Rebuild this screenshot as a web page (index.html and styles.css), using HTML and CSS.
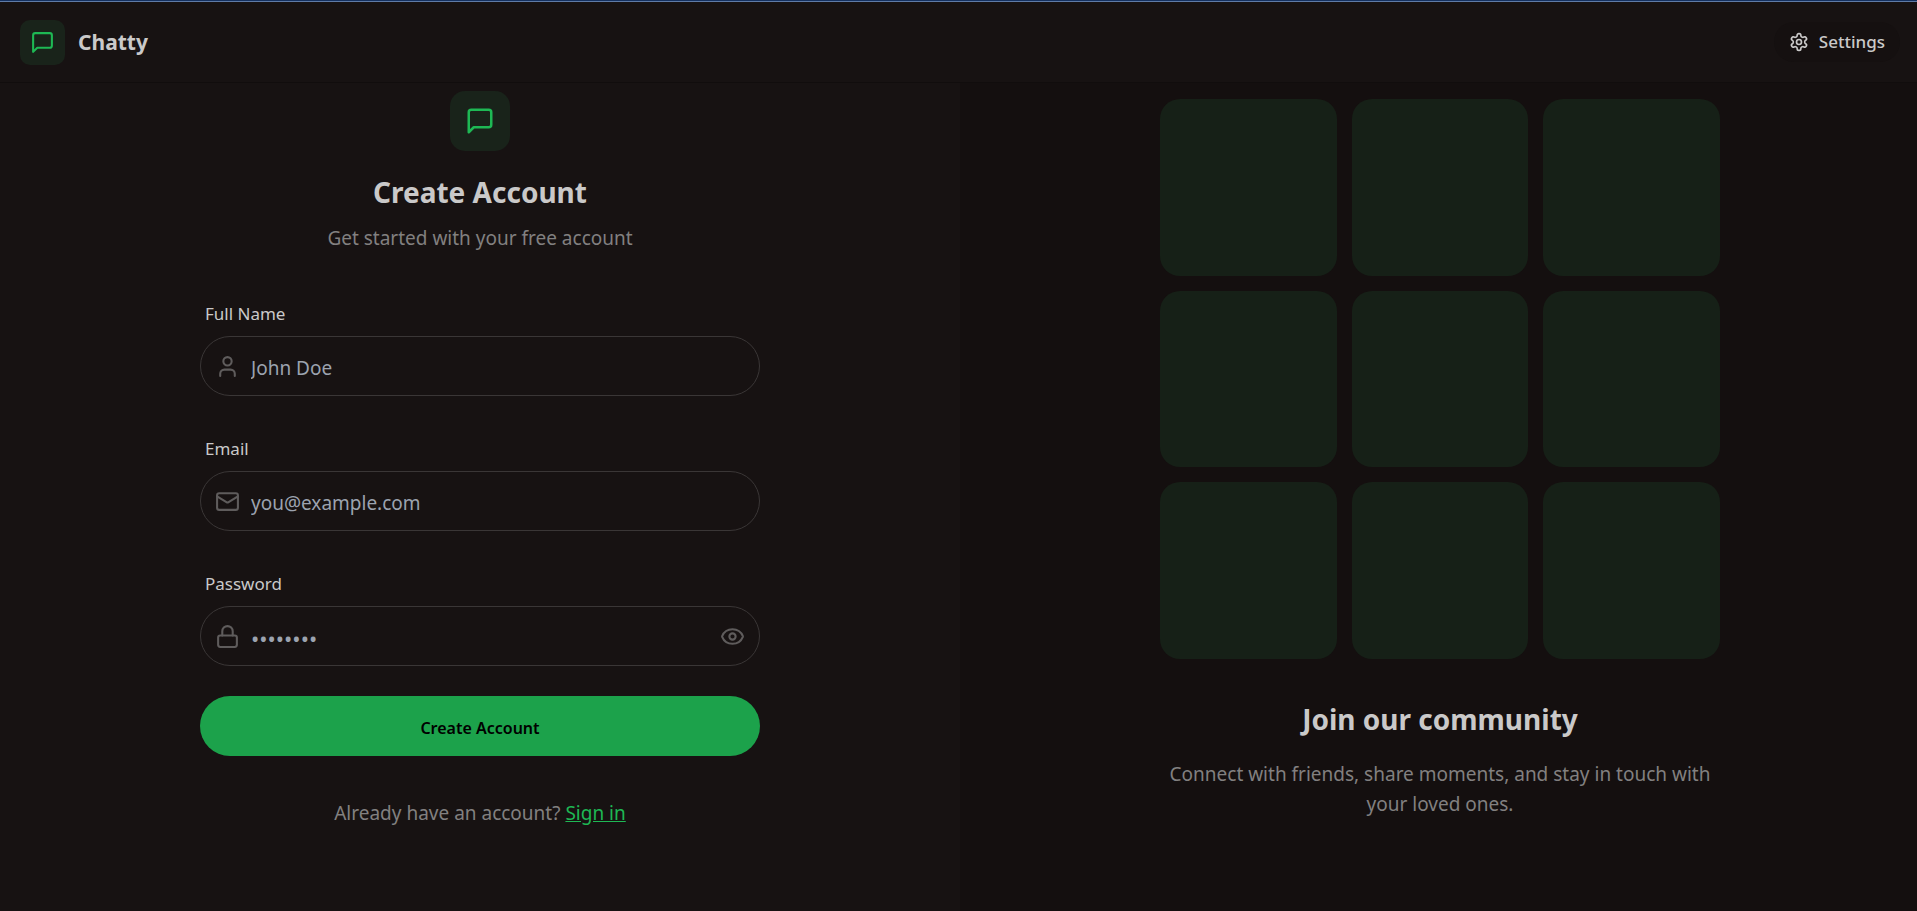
FILE: index.html
```html
<!DOCTYPE html>
<html lang="en">
<head>
<meta charset="utf-8">
<meta name="viewport" content="width=device-width, initial-scale=1">
<title>Chatty</title>
<link rel="stylesheet" href="styles.css">
</head>
<body>
<div class="page">
  <header class="topbar">
    <a class="brand" href="#">
      <span class="brand-mark">
        <svg class="icon" viewBox="0 0 24 24"><path d="M21 15a2 2 0 0 1-2 2H7l-4 4V5a2 2 0 0 1 2-2h14a2 2 0 0 1 2 2z"/></svg>
      </span>
      <span class="brand-name">Chatty</span>
    </a>
    <a class="settings" href="#">
      <svg class="icon icon-small" viewBox="0 0 24 24"><path d="M12.22 2h-.44a2 2 0 0 0-2 2v.18a2 2 0 0 1-1 1.73l-.43.25a2 2 0 0 1-2 0l-.15-.08a2 2 0 0 0-2.73.73l-.22.38a2 2 0 0 0 .73 2.73l.15.1a2 2 0 0 1 1 1.72v.51a2 2 0 0 1-1 1.74l-.15.09a2 2 0 0 0-.73 2.73l.22.38a2 2 0 0 0 2.73.73l.15-.08a2 2 0 0 1 2 0l.43.25a2 2 0 0 1 1 1.73V20a2 2 0 0 0 2 2h.44a2 2 0 0 0 2-2v-.18a2 2 0 0 1 1-1.73l.43-.25a2 2 0 0 1 2 0l.15.08a2 2 0 0 0 2.73-.73l.22-.39a2 2 0 0 0-.73-2.73l-.15-.08a2 2 0 0 1-1-1.74v-.5a2 2 0 0 1 1-1.74l.15-.09a2 2 0 0 0 .73-2.73l-.22-.38a2 2 0 0 0-2.73-.73l-.15.08a2 2 0 0 1-2 0l-.43-.25a2 2 0 0 1-1-1.73V4a2 2 0 0 0-2-2z"/><circle cx="12" cy="12" r="3"/></svg>
      <span>Settings</span>
    </a>
  </header>

  <main class="columns">
    <section class="panel">
      <div class="content">
        <div class="intro">
          <span class="intro-mark">
            <svg class="icon icon-large" viewBox="0 0 24 24"><path d="M21 15a2 2 0 0 1-2 2H7l-4 4V5a2 2 0 0 1 2-2h14a2 2 0 0 1 2 2z"/></svg>
          </span>
          <h1 class="title">Create Account</h1>
          <p class="muted">Get started with your free account</p>
        </div>

        <form class="form">
          <div class="field">
            <label class="label" for="name">Full Name</label>
            <div class="control">
              <svg class="icon" viewBox="0 0 24 24"><path d="M19 21v-2a4 4 0 0 0-4-4H9a4 4 0 0 0-4 4v2"/><circle cx="12" cy="7" r="4"/></svg>
              <input class="input" id="name" type="text" placeholder="John Doe">
            </div>
          </div>
          <div class="field">
            <label class="label" for="email">Email</label>
            <div class="control">
              <svg class="icon" viewBox="0 0 24 24"><rect x="2" y="4" width="20" height="16" rx="2"/><path d="m22 7-8.970 5.700a1.940 1.940 0 0 1-2.060 0L2 7"/></svg>
              <input class="input" id="email" type="email" placeholder="you@example.com">
            </div>
          </div>
          <div class="field">
            <label class="label" for="password">Password</label>
            <div class="control">
              <svg class="icon" viewBox="0 0 24 24"><rect x="3" y="11" width="18" height="11" rx="2"/><path d="M7 11V7a5 5 0 0 1 10 0v4"/></svg>
              <input class="input input-secret" id="password" type="password" placeholder="••••••••">
              <button class="reveal" type="button" aria-label="Show password">
                <svg class="icon" viewBox="0 0 24 24"><path d="M2.062 12.348a1 1 0 0 1 0-.696 10.750 10.750 0 0 1 19.876 0 1 1 0 0 1 0 .696 10.750 10.750 0 0 1-19.876 0"/><circle cx="12" cy="12" r="3"/></svg>
              </button>
            </div>
          </div>
          <button class="submit" type="submit">Create Account</button>
        </form>

        <p class="muted signin">Already have an account? <a class="link" href="#">Sign in</a></p>
      </div>
    </section>

    <section class="panel panel-dark">
      <div class="content">
        <div class="tiles">
          <div class="tile"></div><div class="tile"></div><div class="tile"></div>
          <div class="tile"></div><div class="tile"></div><div class="tile"></div>
          <div class="tile"></div><div class="tile"></div><div class="tile"></div>
        </div>
        <h2 class="title community">Join our community</h2>
        <p class="muted">Connect with friends, share moments, and stay in touch with your loved ones.</p>
      </div>
    </section>
  </main>
</div>
</body>
</html>
```
FILE: styles.css
```css
* {
  box-sizing: border-box;
  margin: 0;
}

body {
  overflow-x: hidden;
  background: #171212;
  color: #cac9c9;
  font: 19px/30px "Segoe UI", "Noto Sans", "Open Sans", sans-serif;
}

/* Runs slightly past the window edge on the right. */
.page {
  display: flex;
  flex-direction: column;
  width: calc(100% + 3px);
  min-height: 100vh;
}

.page::before {
  content: "";
  height: 2px;
  background: linear-gradient(#14305f 50%, #5f7ba6 50%);
}

.icon {
  display: block;
  flex: none;
  width: 25px;
  height: 25px;
  fill: none;
  stroke: currentColor;
  stroke-width: 2;
  stroke-linecap: round;
  stroke-linejoin: round;
}

.icon-small {
  width: 20px;
  height: 20px;
}

.icon-large {
  width: 30px;
  height: 30px;
}

.topbar {
  display: flex;
  align-items: center;
  justify-content: space-between;
  height: 81px;
  padding: 0 20px;
  border-bottom: 1px solid #110d0d;
}

.brand {
  display: flex;
  align-items: center;
  gap: 13px;
  color: inherit;
  text-decoration: none;
}

.brand-mark,
.intro-mark {
  display: grid;
  place-items: center;
  background: #19231a;
  color: #1eb854;
}

.brand-mark {
  width: 45px;
  height: 45px;
  border-radius: 10px;
}

.brand-name {
  font-size: 21px;
  font-weight: 700;
}

.settings {
  display: flex;
  align-items: center;
  gap: 10px;
  height: 40px;
  padding: 0 15px;
  border-radius: 20px;
  background: #151010;
  color: inherit;
  font-size: 17px;
  font-weight: 500;
  text-decoration: none;
}

.columns {
  display: grid;
  grid-template-columns: 1fr 1fr;
  flex: 1;
}

.panel {
  display: flex;
  align-items: flex-start;
  justify-content: center;
  padding: 8px 60px 60px;
}

.panel-dark {
  padding-top: 16px;
  background: #140f0f;
  text-align: center;
}

.content {
  width: 100%;
  max-width: 560px;
}

.intro {
  display: flex;
  flex-direction: column;
  align-items: center;
  gap: 11px;
  margin-bottom: 38px;
}

.intro-mark {
  width: 60px;
  height: 60px;
  margin-bottom: 10px;
  border-radius: 15px;
}

.title {
  font-size: 28px;
  line-height: 40px;
  font-weight: 700;
}

.muted {
  color: #828080;
}

.form {
  display: flex;
  flex-direction: column;
  gap: 30px;
}

.label {
  display: block;
  padding: 8px 5px 7px;
  font-size: 17px;
}

.control {
  display: flex;
  align-items: center;
  gap: 11px;
  height: 60px;
  padding: 0 14px;
  border: 1px solid #3a3636;
  border-radius: 30px;
  color: #5f5c5c;
}

.input {
  flex: 1;
  min-width: 0;
  height: 100%;
  padding: 3px 0 0;
  border: 0;
  outline: 0;
  background: none;
  color: #cac9c9;
  font: inherit;
}

.input-secret {
  font-size: 22px;
}

.input::placeholder {
  color: #9ca3af;
  opacity: 1;
}

.reveal {
  padding: 0;
  border: 0;
  background: none;
  color: inherit;
  cursor: pointer;
}

.submit {
  height: 60px;
  padding: 3px 0 0;
  border: 0;
  border-radius: 30px;
  background: #1ca24b;
  color: #000;
  font: inherit;
  font-size: 16px;
  font-weight: 600;
  cursor: pointer;
}

.signin {
  margin-top: 42px;
  text-align: center;
}

.link {
  color: #1eb854;
}

.tiles {
  display: grid;
  grid-template-columns: repeat(3, 1fr);
  gap: 15px;
}

.tile {
  aspect-ratio: 1;
  border-radius: 20px;
  background: #162017;
}

.community {
  margin: 40px 0 20px;
}
```
